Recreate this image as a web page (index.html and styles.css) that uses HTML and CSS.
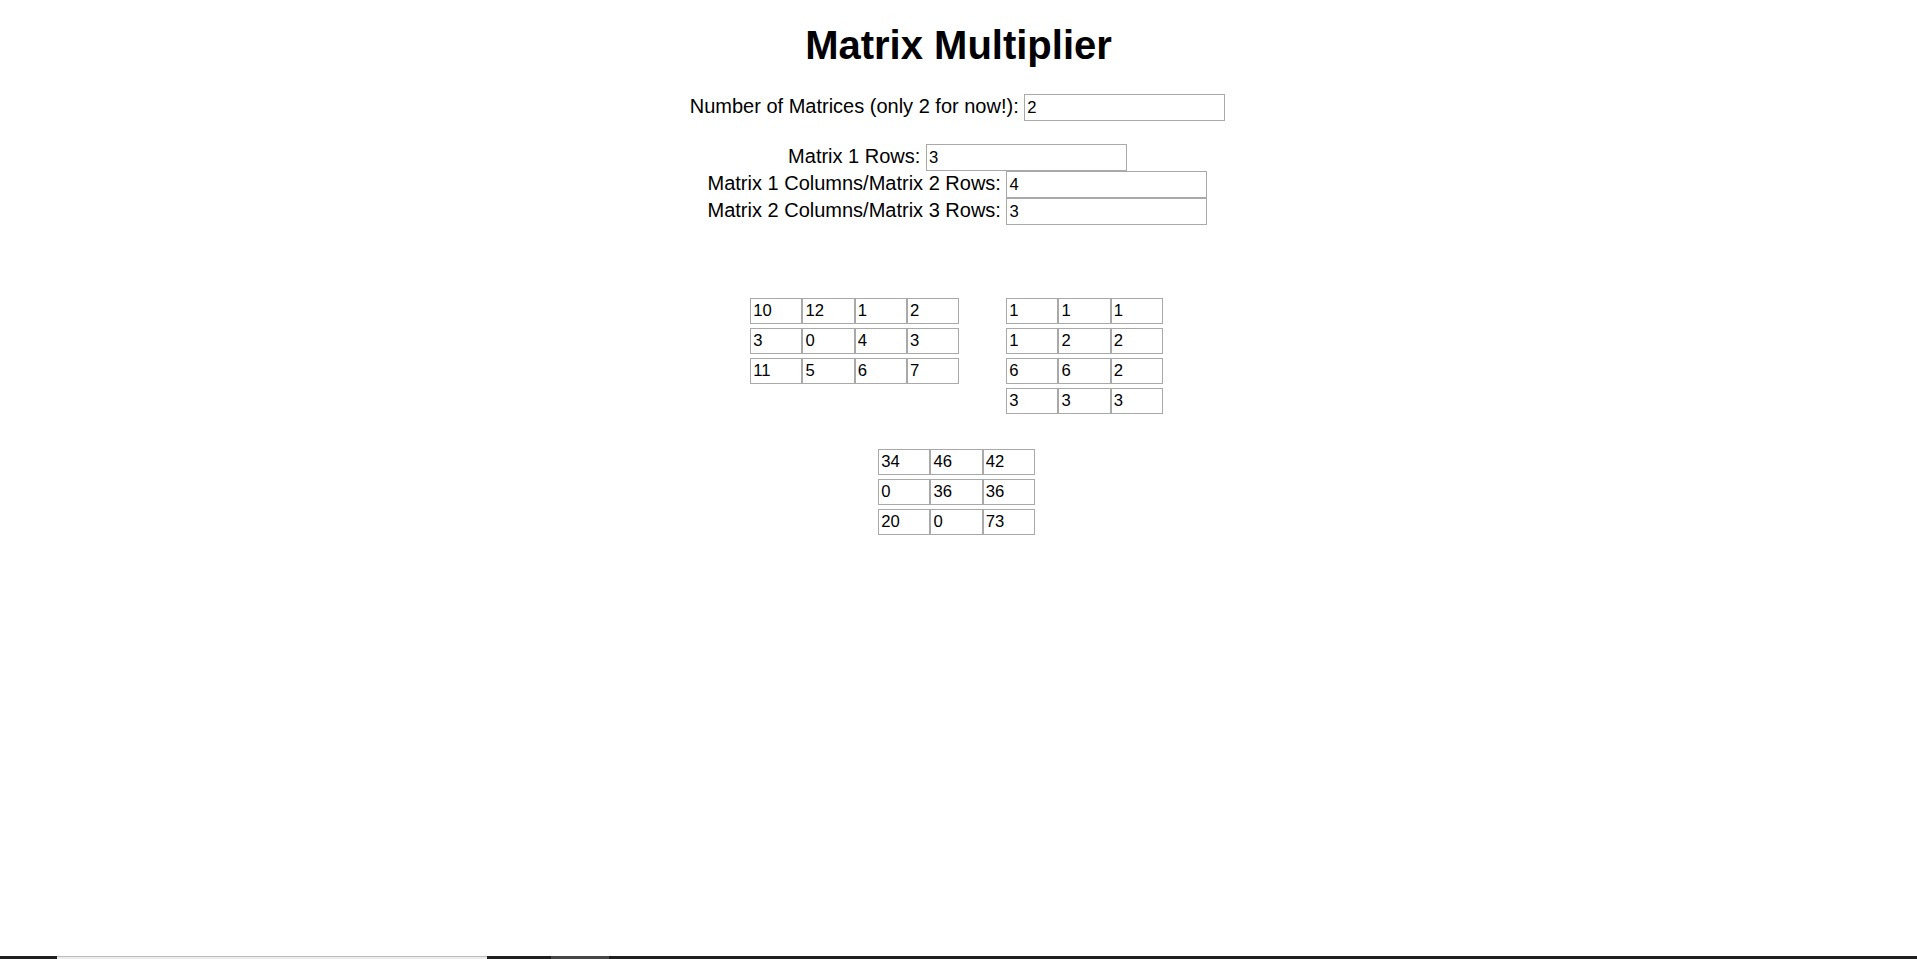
FILE: index.html
```html
<!DOCTYPE html>
<html lang="en">
<head>
<meta charset="utf-8">
<title>Matrix Multiplier</title>
<link rel="stylesheet" href="styles.css">
</head>
<body>
<h1 class="title">Matrix Multiplier</h1>

<div class="count-row">Number of Matrices (only 2 for now!): <input class="field" type="text" value="2"></div>

<div class="dims">
  <div class="dim-row">Matrix 1 Rows: <input class="field" type="text" value="3"></div>
  <div class="dim-row">Matrix 1 Columns/Matrix 2 Rows: <input class="field" type="text" value="4"></div>
  <div class="dim-row">Matrix 2 Columns/Matrix 3 Rows: <input class="field" type="text" value="3"></div>
</div>

<div class="matrices">
  <div class="matrix">
    <div class="mrow"><input class="cell" value="10"><input class="cell" value="12"><input class="cell" value="1"><input class="cell" value="2"></div>
    <div class="mrow"><input class="cell" value="3"><input class="cell" value="0"><input class="cell" value="4"><input class="cell" value="3"></div>
    <div class="mrow"><input class="cell" value="11"><input class="cell" value="5"><input class="cell" value="6"><input class="cell" value="7"></div>
  </div>
  <div class="matrix">
    <div class="mrow"><input class="cell" value="1"><input class="cell" value="1"><input class="cell" value="1"></div>
    <div class="mrow"><input class="cell" value="1"><input class="cell" value="2"><input class="cell" value="2"></div>
    <div class="mrow"><input class="cell" value="6"><input class="cell" value="6"><input class="cell" value="2"></div>
    <div class="mrow"><input class="cell" value="3"><input class="cell" value="3"><input class="cell" value="3"></div>
  </div>
</div>

<div class="result">
  <div class="matrix">
    <div class="mrow"><input class="cell" value="34"><input class="cell" value="46"><input class="cell" value="42"></div>
    <div class="mrow"><input class="cell" value="0"><input class="cell" value="36"><input class="cell" value="36"></div>
    <div class="mrow"><input class="cell" value="20"><input class="cell" value="0"><input class="cell" value="73"></div>
  </div>
</div>

<div class="taskbar">
  <span class="seg seg-dark seg-a"></span>
  <span class="seg seg-light"></span>
  <span class="seg seg-dark seg-b"></span>
  <span class="seg seg-grey"></span>
  <span class="seg seg-dark seg-rest"></span>
</div>
</body>
</html>
```

FILE: styles.css
```css
html, body {
  margin: 0;
  padding: 0;
  background: #ffffff;
}

body {
  font-family: "Liberation Sans", Arial, sans-serif;
  font-size: 20px;
  color: #000;
}

.title {
  font-size: 40px;
  font-weight: bold;
  line-height: 46px;
  text-align: center;
  margin: 22px 0 0;
}

.count-row {
  margin-top: 26px;
  padding-right: 2px;
  text-align: center;
  line-height: 23px;
}

.dims {
  margin-top: 23px;
  padding-right: 2px;
  text-align: center;
  line-height: 23px;
}

.field {
  box-sizing: border-box;
  width: 201px;
  height: 27px;
  margin: 0;
  padding: 1px 2px;
  border: 1px solid #a9a9a9;
  font-family: "Liberation Sans", Arial, sans-serif;
  font-size: 16.67px;
  color: #000;
  background: #fff;
  vertical-align: baseline;
  outline: none;
}

.matrices {
  display: flex;
  justify-content: center;
  align-items: flex-start;
  gap: 47px;
  margin-top: 73px;
  padding-right: 4px;
}

.result {
  display: flex;
  justify-content: center;
  margin-top: 35px;
  padding-right: 4px;
}

.matrix {
  display: flex;
  flex-direction: column;
  gap: 4px;
}

.mrow {
  display: flex;
}

.cell {
  box-sizing: border-box;
  width: 52.25px;
  height: 26px;
  margin: 0;
  padding: 1px 2px;
  border: 1px solid #a9a9a9;
  font-family: "Liberation Sans", Arial, sans-serif;
  font-size: 16.67px;
  color: #000;
  background: #fff;
  outline: none;
}

.taskbar {
  position: fixed;
  left: 0;
  right: 0;
  bottom: 0;
  height: 3px;
  display: flex;
}

.seg {
  display: block;
  height: 100%;
}

.seg-dark {
  background: #1f1f1f;
}

.seg-a {
  width: 57px;
}

.seg-light {
  width: 430px;
  box-sizing: border-box;
  border-top: 1px solid #bdbdbd;
  background: #ececec;
}

.seg-b {
  width: 64px;
}

.seg-grey {
  width: 58px;
  background: #474747;
}

.seg-rest {
  flex: 1;
}
```
